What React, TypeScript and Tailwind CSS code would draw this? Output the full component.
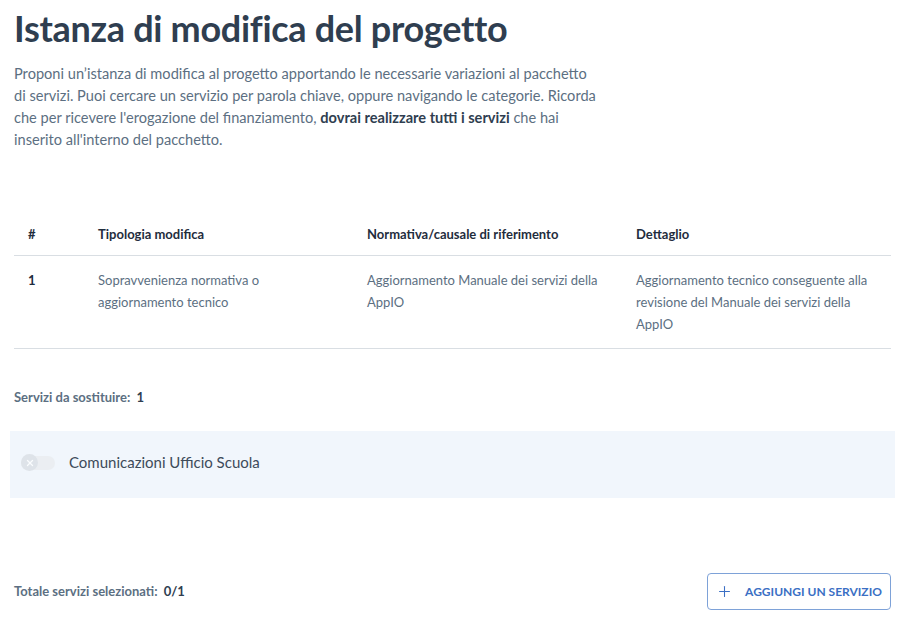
import { Plus, X } from "lucide-react";

const rows = [
  {
    id: "1",
    tipologia: "Sopravvenienza normativa o aggiornamento tecnico",
    normativa: "Aggiornamento Manuale dei servizi della AppIO",
    dettaglio: "Aggiornamento tecnico conseguente alla revisione del Manuale dei servizi della AppIO",
  },
];

export default function App() {
  return (
    <div className="min-h-screen bg-white font-['Lato',sans-serif] text-[#5c6f82]">
      <div className="pl-[14px] pr-[27px] pt-[4px]">
        <h1 className="text-[36px] font-bold leading-[48px] tracking-[-0.3px] text-[#2f3e50]">
          Istanza di modifica del progetto
        </h1>

        <p className="mt-[11px] w-[610px] text-[14.6px] leading-[22px]">
          Proponi un’istanza di modifica al progetto apportando le necessarie variazioni al pacchetto
          <br />
          di servizi. Puoi cercare un servizio per parola chiave, oppure navigando le categorie. Ricorda
          <br />
          che per ricevere l'erogazione del finanziamento,{" "}
          <span className="font-bold text-[#2f3e50]">dovrai realizzare tutti i servizi</span> che hai
          <br />
          inserito all'interno del pacchetto.
        </p>

        {/* Tabella modifiche */}
        <table className="mt-[74px] w-full border-collapse text-left text-[13px]">
          <thead>
            <tr className="border-b border-[#d9dee3] text-[#1f2d3d]">
              <th className="w-[84px] pb-[10px] pl-[14px] font-bold">#</th>
              <th className="w-[269px] pb-[10px] font-bold">Tipologia modifica</th>
              <th className="w-[269px] pb-[10px] font-bold">Normativa/causale di riferimento</th>
              <th className="pb-[10px] font-bold">Dettaglio</th>
            </tr>
          </thead>
          <tbody>
            {rows.map((r) => (
              <tr key={r.id} className="border-b border-[#d9dee3] align-top leading-[22px]">
                <td className="pl-[14px] pt-[13px] pb-[13px] font-bold text-[#1f2d3d]">{r.id}</td>
                <td className="pt-[13px] pb-[13px] pr-[60px]">{r.tipologia}</td>
                <td className="pt-[13px] pb-[13px] pr-[20px]">{r.normativa}</td>
                <td className="pt-[13px] pb-[13px] pr-[20px]">{r.dettaglio}</td>
              </tr>
            ))}
          </tbody>
        </table>

        <div className="mt-[39px] text-[13px] font-bold">
          Servizi da sostituire: <span className="ml-[3px] text-[#2f3e50]">1</span>
        </div>
      </div>

      <div className="ml-[10px] mr-[23px] mt-[24px] flex h-[67px] items-center gap-[14px] bg-[#f1f6fc] pb-[4px] pl-[11px]">
        <div className="flex h-[14px] w-[34px] items-center rounded-full bg-[#e9ecef] opacity-70">
          <span className="flex h-[17px] w-[17px] items-center justify-center rounded-full bg-[#d7dce1]">
            <X size={10} strokeWidth={3} className="text-white" />
          </span>
        </div>
        <span className="text-[15px] text-[#3d4b5a]">Comunicazioni Ufficio Scuola</span>
      </div>

      <div className="mt-[75px] flex items-center justify-between pl-[14px] pr-[27px]">
        <div className="text-[13px] font-bold">
          Totale servizi selezionati: <span className="ml-[3px] text-[#2f3e50]">0/1</span>
        </div>
        <button className="flex h-[37px] w-[184px] items-center justify-center gap-[12px] rounded-[4px] border border-[#7ea2d8] text-[12px] font-bold uppercase text-[#3b6fc4]">
          <Plus size={17} strokeWidth={1.5} />
          Aggiungi un servizio
        </button>
      </div>
    </div>
  );
}
